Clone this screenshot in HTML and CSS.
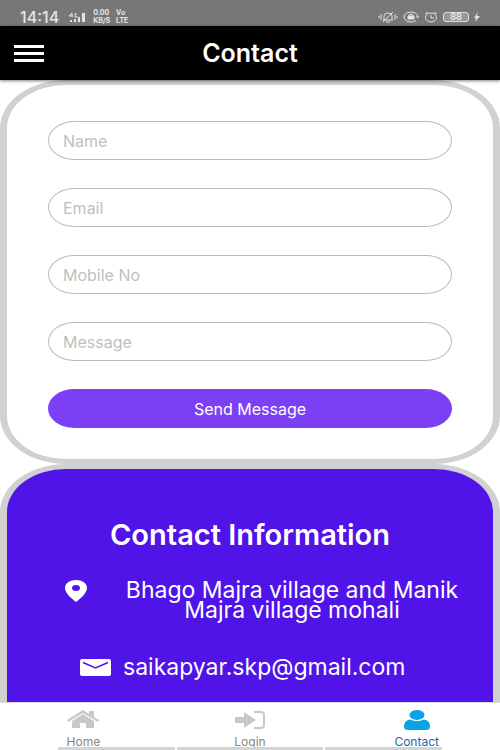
FILE: index.html
```html
<!DOCTYPE html>
<html lang="en">
<head>
<meta charset="utf-8">
<meta name="viewport" content="width=device-width, initial-scale=1">
<title>Contact</title>
<link rel="stylesheet" href="styles.css">
</head>
<body>
<div class="status">
  <div class="status-group">
    <span class="clock">14:14</span>
    <svg class="signal" width="20" height="11" viewBox="0 0 20 11" fill="currentColor" aria-hidden="true">
      <path d="M3 8h2v2H3zM7 7h2v3H7zM11 5h2v5h-2zM15 1h3v9h-3z"/>
      <path d="M5 5V1L2 4h4M10 2H8v3h2V4" fill="none" stroke="currentColor"/>
    </svg>
    <span class="tiny"><span>0.00</span><span>KB/S</span></span>
    <span class="tiny"><span>Vo</span><span>LTE</span></span>
  </div>
  <div class="status-group status-icons">
    <svg width="20" height="12" viewBox="0 0 20 12" fill="none" stroke="currentColor" aria-hidden="true">
      <path d="M1 5v2M3 3v6M17 3v6M19 5v2M5 9h10M6 9V5q0-3 4-3t4 3v4M8 11h4M5 11 15 1"/>
    </svg>
    <svg width="16" height="12" viewBox="0 0 16 12" fill="none" stroke="currentColor" aria-hidden="true">
      <path d="M13 9.500A7 5 0 1 1 15 6M13 6h3"/><path d="M6 5V4q2-2 4 0v1"/><path d="M5 5h6v3H5z" fill="currentColor"/>
    </svg>
    <svg width="14" height="12" viewBox="0 0 14 12" fill="none" stroke="currentColor" aria-hidden="true">
      <ellipse cx="7" cy="6.500" rx="5.500" ry="4.500"/><path d="M7 4v3h3M1 3l3-2M13 3l-3-2"/>
    </svg>
    <span class="battery">88</span>
    <svg width="6" height="12" viewBox="0 0 6 12" fill="currentColor" aria-hidden="true"><path d="M4 1 0 7h2L1 11l5-6H3z"/></svg>
  </div>
</div>
<header class="header">
  <button class="menu" type="button" aria-label="Menu"><span></span><span></span><span></span></button>
  <h1>Contact</h1>
</header>
<main class="content">
  <form class="card form">
    <input type="text" placeholder="Name" aria-label="Name">
    <input type="email" placeholder="Email" aria-label="Email">
    <input type="tel" placeholder="Mobile No" aria-label="Mobile No">
    <input type="text" placeholder="Message" aria-label="Message">
    <button type="button">Send Message</button>
  </form>
  <section class="card info">
    <h2>Contact Information</h2>
    <div class="row address">
      <svg class="pin" width="22" height="22" viewBox="0 0 22 22" aria-hidden="true">
        <path fill="currentColor" fill-rule="evenodd" d="M11 0C5 0 0 3 0 8c0 5 6 10 11 14 5-4 11-9 11-14 0-5-5-8-11-8zm0 5a4 3 0 1 1 0 6 4 3 0 0 1 0-6z"/>
      </svg>
      <p>Bhago Majra village and Manik Majra village mohali</p>
    </div>
    <div class="row mail">
      <svg width="31" height="17" viewBox="0 0 31 17" aria-hidden="true">
        <rect width="31" height="17" rx="2" fill="currentColor"/>
        <path class="flap" d="M3 3.500 15.500 9 28 3.500"/>
      </svg>
      <p>saikapyar.skp@gmail.com</p>
    </div>
  </section>
</main>
<nav class="tabs">
  <a href="#home">
    <svg width="32" height="20" viewBox="0 0 32 20" fill="currentColor" aria-hidden="true">
      <path d="M0 10 16 0l6 4V1h5v6l5 3-1 2L16 3 1 12z"/><path d="M5 11 16 4l11 7v7h-8v-5h-6v5H5z"/>
    </svg>
    Home
  </a>
  <a href="#login">
    <svg width="32" height="20" viewBox="0 0 32 20" fill="currentColor" aria-hidden="true">
      <path d="M1 7h9V2l12 8-12 8v-5H1z"/><path d="M20 2h7q3 0 3 3v10q0 3-3 3h-7" fill="none" stroke="currentColor" stroke-width="2"/>
    </svg>
    Login
  </a>
  <a href="#contact" class="active">
    <svg width="26" height="20" viewBox="0 0 26 20" fill="currentColor" aria-hidden="true">
      <ellipse cx="13" cy="5" rx="7.500" ry="5"/><path d="M6 9.500q7 3.500 14 0 6 1 6 7 0 3.500-4 3.500H4q-4 0-4-3.500 0-6 6-7z"/>
    </svg>
    Contact
  </a>
  <div class="edge"><span></span><span></span><span></span></div>
</nav>
</body>
</html>
```
FILE: styles.css
```css
* { box-sizing: border-box; }

body {
  margin: 0;
  height: 100vh;
  display: flex;
  flex-direction: column;
  background: #fff;
  font-family: Inter, Roboto, sans-serif;
}

h1, h2, p { margin: 0; }

.status {
  flex: none;
  height: 26px;
  padding: 8px 20px 0;
  display: flex;
  justify-content: space-between;
  background: #777;
  color: #e4e4e4;
}

.status-group {
  display: flex;
  align-items: center;
  gap: 6px;
}

.clock { font-size: 16px; line-height: 18px; font-weight: 500; }
.signal { margin-left: 2px; }
.tiny { display: grid; font-size: 7px; line-height: 8px; font-weight: 700; }
.status-icons { gap: 5px; }

.battery {
  width: 26px;
  height: 10px;
  border: 1px solid #ddd;
  border-radius: 3px;
  background: #999;
  font-size: 9px;
  line-height: 8px;
  font-weight: 700;
  text-align: center;
}

.header {
  flex: none;
  height: 54px;
  padding: 0 14px;
  display: grid;
  grid-template-columns: 30px 1fr 30px;
  align-items: center;
  background: #000;
  color: #fff;
  box-shadow: 0 1px 3px rgba(0, 0, 0, 0.5);
  z-index: 1;
}

.header h1 {
  font-size: 25px;
  line-height: 28px;
  font-weight: 600;
  text-align: center;
}

.menu {
  padding: 0;
  border: 0;
  background: none;
  display: grid;
  gap: 4px;
}

.menu span { height: 3px; background: #fff; }

.content {
  flex: 1;
  min-height: 0;
  overflow: hidden;
}

.card {
  border: solid #d1d1d1;
  border-width: 5px 7px;
  border-radius: 66px / 48px;
}

.form {
  padding: 36px 41px 31px;
  display: grid;
  gap: 28px;
}

.form input,
.form button {
  width: 100%;
  height: 39px;
  border-radius: 27px / 20px;
  font-family: inherit;
  font-size: 16px;
}

.form input {
  padding: 0 14px;
  border: 1px solid #bbb;
  background: #fff;
}

.form input::placeholder { color: #c0c0c0; opacity: 1; }

.form button {
  border: 0;
  background: #7b40f5;
  color: #fff;
}

.info {
  padding: 50px 30px 120px 58px;
  background: #5014e8;
  color: #fff;
}

.info h2 {
  margin-right: 28px;
  font-size: 29px;
  line-height: 32px;
  font-weight: 600;
  text-align: center;
  white-space: nowrap;
}

.row {
  display: flex;
  font-size: 23px;
  line-height: 20px;
}

.address { margin-top: 29px; gap: 34px; }
.address p { flex: 1; text-align: center; }
.mail { margin-top: 37px; padding-left: 15px; gap: 12px; align-items: center; }
.pin { flex: none; }
.flap { fill: none; stroke: #5014e8; stroke-width: 1.5; }

.tabs {
  flex: none;
  height: 48px;
  padding-top: 7px;
  display: grid;
  grid-template-columns: repeat(3, 1fr);
  background: #fff;
  border-top: 1px solid #ddd;
}

.tabs a {
  display: flex;
  flex-direction: column;
  align-items: center;
  gap: 6px;
  color: #858585;
  font-size: 12px;
  line-height: 11px;
  text-decoration: none;
}

.tabs svg { color: #c8c8c8; }
.tabs a.active { color: #1569ad; }
.tabs .active svg { color: #0aa3e6; }

.edge {
  grid-column: 1 / -1;
  height: 3px;
  padding: 0 58px;
  display: grid;
  grid-template-columns: 4fr 5fr 4fr;
  gap: 2px;
}

.edge span { background: #d4d4d4; }
```
